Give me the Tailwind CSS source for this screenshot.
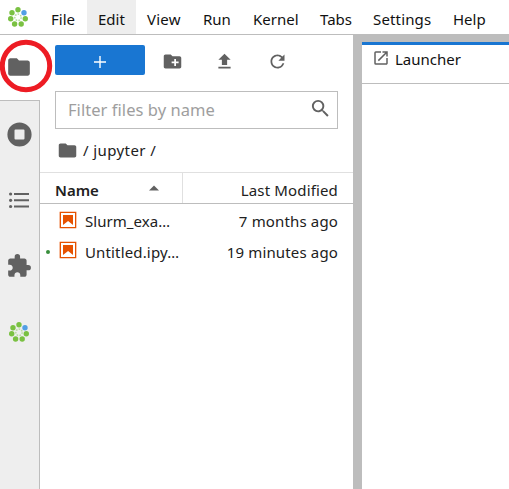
<!DOCTYPE html>
<html lang="en">
<head>
<meta charset="utf-8">
<title>JupyterLab</title>
<script src="https://cdn.jsdelivr.net/npm/@tailwindcss/browser@4"></script>
</head>
<body class="w-[509px] h-[489px] overflow-hidden bg-white text-[15px] leading-5 text-[#212121] font-['Noto_Sans','Open_Sans',sans-serif]">
<svg class="hidden">
  <symbol id="folder" viewBox="0 0 24 24"><path d="M10 4H4c-1.1 0-1.99.9-1.99 2L2 18c0 1.1.9 2 2 2h16c1.1 0 2-.9 2-2V8c0-1.1-.9-2-2-2h-8l-2-2z"/></symbol>
  <symbol id="logo" viewBox="0 0 20 20">
    <g fill="#7ac142"><circle cx="10" cy="2.7" r="2.7"/><circle cx="4" cy="5.700" r="2.700"/><circle cx="2.700" cy="11.700" r="2.700"/><circle cx="6.600" cy="17" r="2.700"/><circle cx="13.200" cy="17" r="2.700"/><circle cx="17.300" cy="11.700" r="2.700"/></g>
    <circle cx="16" cy="5.700" r="2.700" fill="#519fe4"/>
    <circle cx="10" cy="10.300" r="3.200" fill="none" stroke="#b8dda0" stroke-width="1.500" stroke-dasharray="1.700 1.150"/>
  </symbol>
  <symbol id="notebook" viewBox="0 0 22 22"><path d="M18.7 3.3v15.4H3.3V3.3h15.4m1.5-1.5H1.8v18.3h18.3l.1-18.3z"/><path d="M16.5 16.5l-5.4-4.3-5.6 4.3v-11h11z"/></symbol>
</svg>
<div class="flex flex-col h-full">
  <nav class="flex h-[35px] shrink-0 border-b border-[#bdbdbd] text-[#111] items-stretch whitespace-nowrap">
    <div class="w-[40px] pl-[8px] pt-[7px]"><svg class="size-5"><use href="#logo"/></svg></div>
    <div class="w-[47px] pl-[11px] pt-[9px]">File</div>
    <div class="w-[49px] pl-[11px] pt-[9px] bg-[#eeeeee]">Edit</div>
    <div class="w-[56px] pl-[11px] pt-[9px] tracking-[0.2px]">View</div>
    <div class="w-[50px] pl-[11px] pt-[9px]">Run</div>
    <div class="w-[67px] pl-[11px] pt-[9px]">Kernel</div>
    <div class="w-[53px] pl-[11px] pt-[9px]">Tabs</div>
    <div class="w-[80px] pl-[11px] pt-[9px] tracking-[0.15px]">Settings</div>
    <div class="pl-[11px] pt-[9px]">Help</div>
  </nav>
  <div class="flex flex-1 min-h-0">
    <aside class="w-[40px] shrink-0 flex flex-col fill-[#616161]">
      <div class="h-[65px] pl-[6px] pt-[19px]"><svg class="size-[26px]"><use href="#folder"/></svg></div>
      <div class="flex-1 bg-[#eeeeee] border-t border-r border-[#bdbdbd] flex flex-col">
        <div class="h-[66px] pl-[6.5px] pt-[20.5px]"><svg class="size-[25px]" viewBox="0 0 25 25"><path fill-rule="evenodd" d="M12.5.4a12.1 12.1 0 1 0 0 24.2a12.1 12.1 0 0 0 0-24.2zM8.500 7.500h8q1 0 1 1v8q0 1-1 1h-8q-1 0-1-1v-8q0-1 1-1z"/></svg></div>
        <div class="h-[66px] pl-[8px] pt-[24px]"><svg class="w-[22px] h-[20px]" viewBox="0 0 22 20"><path d="M6 2h15v2H6zM6 8.300h15v2H6zM6 14.500h15v2H6z"/><circle cx="2.600" cy="3" r="1.600"/><circle cx="2.600" cy="9.300" r="1.600"/><circle cx="2.600" cy="15.500" r="1.600"/></svg></div>
        <div class="h-[66px] pl-[6px] pt-[20px]"><svg class="size-[26px]" viewBox="0 0 24 24"><path d="M20.5 11H19V7c0-1.1-.9-2-2-2h-4V3.500a2.500 2.500 0 0 0-5 0V5H4c-1.100 0-1.990.9-1.990 2v3.800H3.500c1.490 0 2.700 1.210 2.700 2.700s-1.210 2.700-2.700 2.700H2V20c0 1.100.9 2 2 2h3.800v-1.500c0-1.490 1.210-2.700 2.700-2.700 1.490 0 2.700 1.210 2.700 2.700V22H17c1.100 0 2-.9 2-2v-4h1.500a2.500 2.500 0 0 0 0-5z"/></svg></div>
        <div class="pl-[9px] pt-[23px]"><svg class="size-5"><use href="#logo"/></svg></div>
      </div>
    </aside>
    <main class="w-[313px] shrink-0 flex flex-col whitespace-nowrap">
      <div class="flex pl-[15px] pt-[10px] h-[56px] fill-[#616161]">
        <button class="w-[90px] h-[30px] rounded-[2px] bg-[#1976d2] flex items-center justify-center"><svg class="size-[18px] mt-[4px]" viewBox="0 0 18 18"><path fill="#fff" d="M8.300 3h1.400v5.300H15v1.400H9.700V15H8.300V9.700H3V8.300h5.300z"/></svg></button>
        <svg class="size-[21px] ml-[17px] mt-[6px]" viewBox="0 0 24 24"><path d="M20 6h-8l-2-2H4c-1.110 0-1.990.89-1.990 2L2 18c0 1.110.89 2 2 2h16c1.110 0 2-.89 2-2V8c0-1.110-.89-2-2-2zm-1 8h-3v3h-2v-3h-3v-2h3V9h2v3h3v2z"/></svg>
        <svg class="size-[21px] ml-[31px] mt-[6px]" viewBox="0 0 24 24"><path d="M9 16h6v-6h4l-7-7-7 7h4zm-4 2h14v2H5z"/></svg>
        <svg class="size-[21px] ml-[32px] mt-[6px]" viewBox="0 0 24 24"><path d="M17.650 6.350A7.958 7.958 0 0 0 12 4c-4.420 0-7.990 3.580-7.990 8s3.570 8 7.990 8c3.730 0 6.840-2.550 7.730-6h-2.080A5.990 5.990 0 0 1 12 18c-3.310 0-6-2.690-6-6s2.690-6 6-6c1.660 0 3.140.69 4.220 1.780L13 11h7V4l-2.350 2.350z"/></svg>
      </div>
      <div class="ml-[15px] w-[283px] h-[38px] border border-[#bdbdbd] flex justify-between pl-[12px] pr-[5px] pt-[6px]">
        <span class="text-[16.500px] leading-6 tracking-[0.05px] text-[#9e9e9e]">Filter files by name</span>
        <svg class="size-[23px] fill-[#616161] -mt-[1px]" viewBox="0 0 24 24"><path d="M15.500 14h-.79l-.28-.27A6.471 6.471 0 0 0 16 9.500 6.500 6.500 0 1 0 9.500 16c1.610 0 3.090-.59 4.230-1.570l.27.28v.79l5 4.990L20.490 19l-4.990-5zm-6 0C7.010 14 5 11.990 5 9.500S7.010 5 9.500 5 14 7.010 14 9.500 11.990 14 9.500 14z"/></svg>
      </div>
      <div class="h-[43px] flex pl-[17px] pt-[11px]">
        <svg class="size-[21px] fill-[#616161]"><use href="#folder"/></svg>
        <span class="ml-[5px] tracking-[0.4px]">/ jupyter /</span>
      </div>
      <div class="h-[32px] flex border-t border-[#e0e0e0] border-b border-b-[#bdbdbd]">
        <div class="w-[143px] border-r border-[#e0e0e0] flex justify-between pl-[15px] pr-[22px] pt-[7px]"><b class="font-semibold">Name</b><svg class="w-[12px] h-[6px] mt-[5px] fill-[#616161]"><path d="M1 5.500L6 .5l5 5z"/></svg></div>
        <div class="flex-1 text-right pr-[15px] pt-[7px] tracking-[0.15px]">Last Modified</div>
      </div>
      <div class="h-[31px] flex mt-[1px] pl-[18px] pr-[15px] pt-[6px]">
        <svg class="size-5 -mt-[1px] fill-[#e65100]"><use href="#notebook"/></svg>
        <span class="ml-[7px] tracking-[0.05px]">Slurm_exa…</span><span class="ml-auto tracking-[0.15px]">7 months ago</span>
      </div>
      <div class="h-[31px] flex pl-[5px] pr-[15px] pt-[6px]">
        <i class="size-[4px] rounded-full bg-[#388e3c] mt-[8px] ml-[1px]"></i>
        <svg class="size-5 ml-[8px] -mt-[2px] fill-[#e65100]"><use href="#notebook"/></svg>
        <span class="ml-[7px] tracking-[0.15px]">Untitled.ipy…</span><span class="ml-auto tracking-[0.15px]">19 minutes ago</span>
      </div>
    </main>
    <div class="w-[9px] shrink-0 bg-[#bdbdbd]"></div>
    <section class="flex-1 flex flex-col">
      <div class="h-[7px] bg-[#bdbdbd]"></div>
      <div class="h-[42px] border-t-[3px] border-t-[#1976d2] border-b border-b-[#bdbdbd] flex pl-[10px] pt-[4px] text-[#111]">
        <svg class="size-[18px] fill-[#616161]" viewBox="0 0 24 24"><path d="M19 19H5V5h7V3H5a2 2 0 0 0-2 2v14a2 2 0 0 0 2 2h14c1.100 0 2-.9 2-2v-7h-2v7zM14 3v2h3.590l-9.830 9.830 1.410 1.410L19 6.410V10h2V3h-7z"/></svg>
        <span class="ml-[5px]">Launcher</span>
      </div>
    </section>
  </div>
</div>
<svg class="absolute left-0 top-[39px] w-[53px] h-[54px]"><circle cx="26" cy="27" r="23.700" fill="none" stroke="#ed1c24" stroke-width="5"/></svg>
</body>
</html>
